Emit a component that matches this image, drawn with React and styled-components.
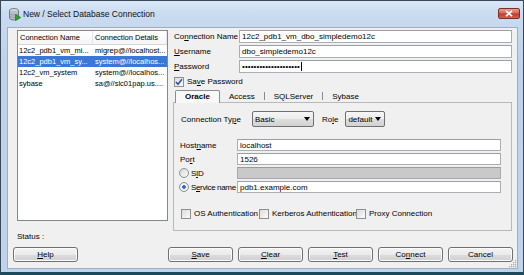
import React from 'react'
import styled, {createGlobalStyle} from 'styled-components'

const GlobalStyle = createGlobalStyle`
  html, body {
    margin: 0;
    padding: 0;
    background: #bed2ea;
  }
  body {
    font-family: "Liberation Sans", Arial, sans-serif;
    font-size: 8px;
    color: #000;
  }
  u {
    text-decoration-thickness: 1px;
    text-underline-offset: 1px;
  }
`

const connections = [
  {name: '12c2_pdb1_vm_mi...', details: 'migrep@//localhost...'},
  {name: '12c2_pdb1_vm_sy...', details: 'system@//localhos...', selected: true},
  {name: '12c2_vm_system', details: 'system@//localhos...'},
  {name: 'sybase', details: 'sa@//slc01pap.us....'},
]

const tabs = ['Oracle', 'Access', 'SQLServer', 'Sybase']

function DbIcon() {
  return (
    <svg width="12" height="13" viewBox="0 0 12 13">
      <ellipse cx="5" cy="2.5" rx="4.5" ry="2" fill="#dfe3e8" stroke="#5b6470" strokeWidth="0.8" />
      <path d="M0.5 2.5 V10 A4.5 2 0 0 0 9.5 10 V2.5" fill="#b9c0c9" stroke="#5b6470" strokeWidth="0.8" />
      <path d="M0.5 5 A4.5 2 0 0 0 9.5 5 M0.5 7.5 A4.5 2 0 0 0 9.5 7.5" fill="none" stroke="#7d8590" strokeWidth="0.6" />
      <path d="M6.5 6.5 L11.8 9.5 L6.5 12.5 Z" fill="#2fa12f" stroke="#1d6b1d" strokeWidth="0.6" />
    </svg>
  )
}

function Check({checked}) {
  return (
    <CheckBox>
      {checked && (
        <svg width="8" height="8" viewBox="0 0 8 8">
          <path d="M1 4 L3 6.3 L7 1.2" fill="none" stroke="#2b4fa8" strokeWidth="1.5" />
        </svg>
      )}
    </CheckBox>
  )
}

function App() {
  return (
    <>
      <GlobalStyle />
      <Window>
        <TitleBar>
          <DbIcon />
          <Title>New / Select Database Connection</Title>
          <CloseButton>
            <svg width="8" height="7" viewBox="0 0 8 7">
              <path d="M1 0.8 L7 6.2 M7 0.8 L1 6.2" stroke="#fff" strokeWidth="1.8" />
            </svg>
          </CloseButton>
        </TitleBar>

        <Body>
          <Main>
            <ListBox>
              <ListHeader>
                <HeadCell $w={75}>Connection Name</HeadCell>
                <HeadCell>Connection Details</HeadCell>
              </ListHeader>
              {connections.map((c) => (
                <ListRow key={c.name} $selected={c.selected}>
                  <Cell $w={75}>{c.name}</Cell>
                  <Cell $pad={2}>{c.details}</Cell>
                </ListRow>
              ))}
            </ListBox>

            <RightPane>
              <FieldRow>
                <FieldLabel $w={66}><span>Co<u>n</u>nection Name</span></FieldLabel>
                <TextInput>12c2_pdb1_vm_dbo_simpledemo12c</TextInput>
              </FieldRow>
              <FieldRow>
                <FieldLabel $w={66}><span><u>U</u>sername</span></FieldLabel>
                <TextInput>dbo_simpledemo12c</TextInput>
              </FieldRow>
              <FieldRow>
                <FieldLabel $w={66}><span><u>P</u>assword</span></FieldLabel>
                <TextInput>
                  <Dots>••••••••••••••••••••</Dots>
                  <Caret />
                </TextInput>
              </FieldRow>
              <CheckRow>
                <CheckItem>
                  <Check checked />
                  <span>Sa<u>v</u>e Password</span>
                </CheckItem>
              </CheckRow>

              <TabStrip>
                {tabs.map((t, i) => (
                  <React.Fragment key={t}>
                    {i > 1 && <TabSep />}
                    <Tab $active={i === 0}>{t}</Tab>
                  </React.Fragment>
                ))}
              </TabStrip>
              <TabPanel>
                <TypeRow>
                  <span>Connection Ty<u>p</u>e</span>
                  <Select $w={62} $ml={11}>
                    Basic
                    <Arrow />
                  </Select>
                  <RoleLabel>Ro<u>l</u>e</RoleLabel>
                  <Select $w={40} $ml={7}>
                    default
                    <Arrow />
                  </Select>
                </TypeRow>

                <Fields>
                  <FieldRow $h={12}>
                    <FieldLabel $w={58}><span>Host<u>n</u>ame</span></FieldLabel>
                    <TextInput>localhost</TextInput>
                  </FieldRow>
                  <FieldRow $h={12}>
                    <FieldLabel $w={58}><span>Po<u>r</u>t</span></FieldLabel>
                    <TextInput>1526</TextInput>
                  </FieldRow>
                  <FieldRow $h={12}>
                    <FieldLabel $w={58} $tight>
                      <Radio />
                      <span>S<u>I</u>D</span>
                    </FieldLabel>
                    <TextInput $disabled />
                  </FieldRow>
                  <FieldRow $h={12}>
                    <FieldLabel $w={58} $tight>
                      <Radio $checked />
                      <span>S<u>e</u>rvice name</span>
                    </FieldLabel>
                    <TextInput>pdb1.example.com</TextInput>
                  </FieldRow>
                </Fields>

                <AuthRow>
                  <CheckItem $w={78}>
                    <Check />
                    <span>OS Authentication</span>
                  </CheckItem>
                  <CheckItem $w={97}>
                    <Check />
                    <span>Kerberos Authentication</span>
                  </CheckItem>
                  <CheckItem>
                    <Check />
                    <span>Proxy Connection</span>
                  </CheckItem>
                </AuthRow>
              </TabPanel>
            </RightPane>
          </Main>

          <Status>Status :</Status>

          <ButtonRow>
            <Button><span><u>H</u>elp</span></Button>
            <Spacer />
            <Button><span><u>S</u>ave</span></Button>
            <Button><span><u>C</u>lear</span></Button>
            <Button><span><u>T</u>est</span></Button>
            <Button><span>Co<u>n</u>nect</span></Button>
            <Button><span>Cancel</span></Button>
          </ButtonRow>
          <Grip>
            <svg width="9" height="9" viewBox="0 0 9 9">
              <g fill="#9aa7b8">
                <rect x="7" y="1" width="1.2" height="1.2" />
                <rect x="5" y="3" width="1.2" height="1.2" />
                <rect x="7" y="3" width="1.2" height="1.2" />
                <rect x="3" y="5" width="1.2" height="1.2" />
                <rect x="5" y="5" width="1.2" height="1.2" />
                <rect x="7" y="5" width="1.2" height="1.2" />
                <rect x="1" y="7" width="1.2" height="1.2" />
                <rect x="3" y="7" width="1.2" height="1.2" />
                <rect x="5" y="7" width="1.2" height="1.2" />
                <rect x="7" y="7" width="1.2" height="1.2" />
              </g>
            </svg>
          </Grip>
        </Body>
      </Window>
    </>
  )
}

const Window = styled.div`
  width: 524px;
  height: 275px;
  box-sizing: border-box;
  display: flex;
  flex-direction: column;
  background: linear-gradient(#dbe7f5 0, #c9dbf0 14px, #bed2ea 60px, #bfd3eb 100%);
  border: 1px solid #39475a;
  border-bottom: 3px solid #1c4a5c;
  padding: 0 5px 3px 6px;
`

const TitleBar = styled.div`
  height: 26px;
  flex: none;
  display: flex;
  align-items: center;
  padding-left: 2px;
  margin-right: -2px;
`

const Title = styled.span`
  margin-left: 2px;
  font-size: 8.5px;
  color: #111;
  white-space: nowrap;
  flex: 1;
`

const CloseButton = styled.div`
  width: 22px;
  height: 11px;
  box-sizing: border-box;
  border: 1px solid #7d2e2a;
  border-radius: 2px;
  background: linear-gradient(#e6a092 0, #d4675a 45%, #c1392b 55%, #d06352 100%);
  display: flex;
  align-items: center;
  justify-content: center;
  align-self: flex-start;
  margin-top: 7px;
`

const Body = styled.div`
  flex: 1;
  position: relative;
  display: flex;
  flex-direction: column;
  background: #f0f0f0;
  border: 1px solid #9eaec3;
  padding: 2px 4px 6px 5px;
`

const Main = styled.div`
  height: 200px;
  display: flex;
  align-items: flex-start;
`

const ListBox = styled.div`
  width: 151px;
  height: 191px;
  box-sizing: border-box;
  margin-left: 4px;
  background: #fff;
  border: 1px solid #828790;
  overflow: hidden;
  font-size: 7.5px;
`

const ListHeader = styled.div`
  height: 13px;
  display: flex;
  border-bottom: 1px solid #d5d5d5;
  background: linear-gradient(#ffffff, #f4f5f7);
`

const HeadCell = styled.div`
  width: ${(p) => (p.$w ? `${p.$w}px` : 'auto')};
  flex: ${(p) => (p.$w ? 'none' : '1')};
  box-sizing: border-box;
  padding-left: 2px;
  line-height: 13px;
  white-space: nowrap;
  overflow: hidden;
  border-right: 1px solid #e3e5e8;
`

const ListRow = styled.div`
  height: 11px;
  display: flex;
  background: ${(p) => (p.$selected ? '#3a77d6' : 'transparent')};
  color: ${(p) => (p.$selected ? '#fff' : '#000')};
`

const Cell = styled.div`
  width: ${(p) => (p.$w ? `${p.$w}px` : 'auto')};
  flex: ${(p) => (p.$w ? 'none' : '1')};
  min-width: 0;
  box-sizing: border-box;
  padding-left: ${(p) => p.$pad || 1}px;
  line-height: 11px;
  white-space: nowrap;
  overflow: hidden;
`

const RightPane = styled.div`
  flex: 1;
  margin-left: 5px;
  margin-right: 1px;
  display: flex;
  flex-direction: column;
`

const FieldRow = styled.div`
  height: ${(p) => p.$h || 13}px;
  display: flex;
  align-items: center;
  margin-bottom: 2px;
`

const FieldLabel = styled.div`
  width: ${(p) => p.$w}px;
  flex: none;
  display: flex;
  align-items: center;
  gap: ${(p) => (p.$tight ? 1 : 2)}px;
  letter-spacing: ${(p) => (p.$tight ? '-0.35px' : 'normal')};
  padding-left: ${(p) => (p.$tight ? 0 : 1)}px;
  box-sizing: border-box;
  white-space: nowrap;
`

const TextInput = styled.div`
  flex: 1;
  align-self: stretch;
  box-sizing: border-box;
  display: flex;
  align-items: center;
  padding-left: 2px;
  background: ${(p) => (p.$disabled ? '#c9c9c9' : '#fff')};
  border: 1px solid ${(p) => (p.$disabled ? '#a9a9a9' : '#abadb3')};
  border-top-color: ${(p) => (p.$disabled ? '#9a9a9a' : '#9a9ea7')};
  white-space: nowrap;
  overflow: hidden;
`

const Dots = styled.span`
  letter-spacing: 0.1px;
  font-size: 8px;
`

const Caret = styled.span`
  width: 1px;
  height: 9px;
  background: #000;
  margin-left: 1px;
`

const CheckRow = styled.div`
  display: flex;
  align-items: center;
  height: 11px;
  margin-top: 1px;
  padding-left: 1px;
`

const CheckItem = styled.label`
  width: ${(p) => (p.$w ? `${p.$w}px` : 'auto')};
  display: flex;
  align-items: center;
  gap: 3px;
  white-space: nowrap;
`

const CheckBox = styled.span`
  width: 10px;
  height: 10px;
  flex: none;
  box-sizing: border-box;
  display: flex;
  align-items: center;
  justify-content: center;
  border: 1px solid #8e8f8f;
  background: linear-gradient(135deg, #dcdcdc, #fbfbfb);
`

const Radio = styled.span`
  width: 10px;
  height: 10px;
  flex: none;
  box-sizing: border-box;
  border-radius: 50%;
  border: 1px solid #8e8f8f;
  background: ${(p) =>
    p.$checked
      ? 'radial-gradient(circle, #2a5fc4 0, #3c7ad8 1.6px, #f4f4f4 2.2px, #e2e2e2 100%)'
      : 'linear-gradient(135deg, #d8d8d8, #fbfbfb)'};
  margin-right: 1px;
`

const TabStrip = styled.div`
  height: 14px;
  margin-top: 1px;
  display: flex;
  align-items: flex-end;
  padding-left: 2px;
`

const Tab = styled.div`
  height: ${(p) => (p.$active ? 13 : 11)}px;
  box-sizing: border-box;
  padding: ${(p) => (p.$active ? '0 9px' : '0 9px')};
  line-height: ${(p) => (p.$active ? 12 : 11)}px;
  font-weight: ${(p) => (p.$active ? 'bold' : 'normal')};
  white-space: nowrap;
  background: ${(p) => (p.$active ? '#f8f8f8' : 'transparent')};
  border: ${(p) => (p.$active ? '1px solid #8c8e94' : 'none')};
  border-bottom: none;
  border-radius: 2px 2px 0 0;
  margin-bottom: ${(p) => (p.$active ? '-1px' : '0')};
  position: relative;
`

const TabSep = styled.span`
  width: 1px;
  height: 8px;
  background: #8a8a8a;
  margin-bottom: 2px;
`

const TabPanel = styled.div`
  height: 129px;
  box-sizing: border-box;
  border: 1px solid #b9b9b9;
  background: #f0f0f0;
  padding: 8px 10px 0 5px;
  display: flex;
  flex-direction: column;
`

const TypeRow = styled.div`
  height: 16px;
  display: flex;
  align-items: center;
  padding-left: 2px;
  white-space: nowrap;
`

const RoleLabel = styled.span`
  margin-left: 8px;
`

const Select = styled.div`
  width: ${(p) => p.$w}px;
  height: 16px;
  margin-left: ${(p) => p.$ml}px;
  box-sizing: border-box;
  display: flex;
  align-items: center;
  justify-content: space-between;
  padding: 0 3px 0 2px;
  border: 1px solid #707070;
  border-radius: 2px;
  background: linear-gradient(#f6f6f6 0, #ececec 50%, #dedede 51%, #d2d2d2 100%);
`

const Arrow = styled.span`
  width: 0;
  height: 0;
  border-left: 3.5px solid transparent;
  border-right: 3.5px solid transparent;
  border-top: 4px solid #000;
`

const Fields = styled.div`
  margin-top: 12px;
  display: flex;
  flex-direction: column;
`

const AuthRow = styled.div`
  display: flex;
  align-items: center;
  height: 11px;
  margin-top: 13px;
  padding-left: 2px;
`

const Status = styled.div`
  height: 17px;
  box-sizing: border-box;
  padding: 2px 0 0 4px;
  line-height: 10px;
`

const ButtonRow = styled.div`
  height: 15px;
  display: flex;
  gap: 5px;
`

const Spacer = styled.div`
  flex: 1;
`

const Button = styled.div`
  width: 65px;
  box-sizing: border-box;
  display: flex;
  align-items: center;
  justify-content: center;
  border: 1px solid #707070;
  border-radius: 3px;
  background: linear-gradient(#f2f2f2 0, #ebebeb 50%, #dddddd 51%, #cfcfcf 100%);
  box-shadow: inset 0 0 0 1px #fcfcfc;
  white-space: nowrap;
`

const Grip = styled.div`
  position: absolute;
  right: 0;
  bottom: 0;
  line-height: 0;
`

export default App
